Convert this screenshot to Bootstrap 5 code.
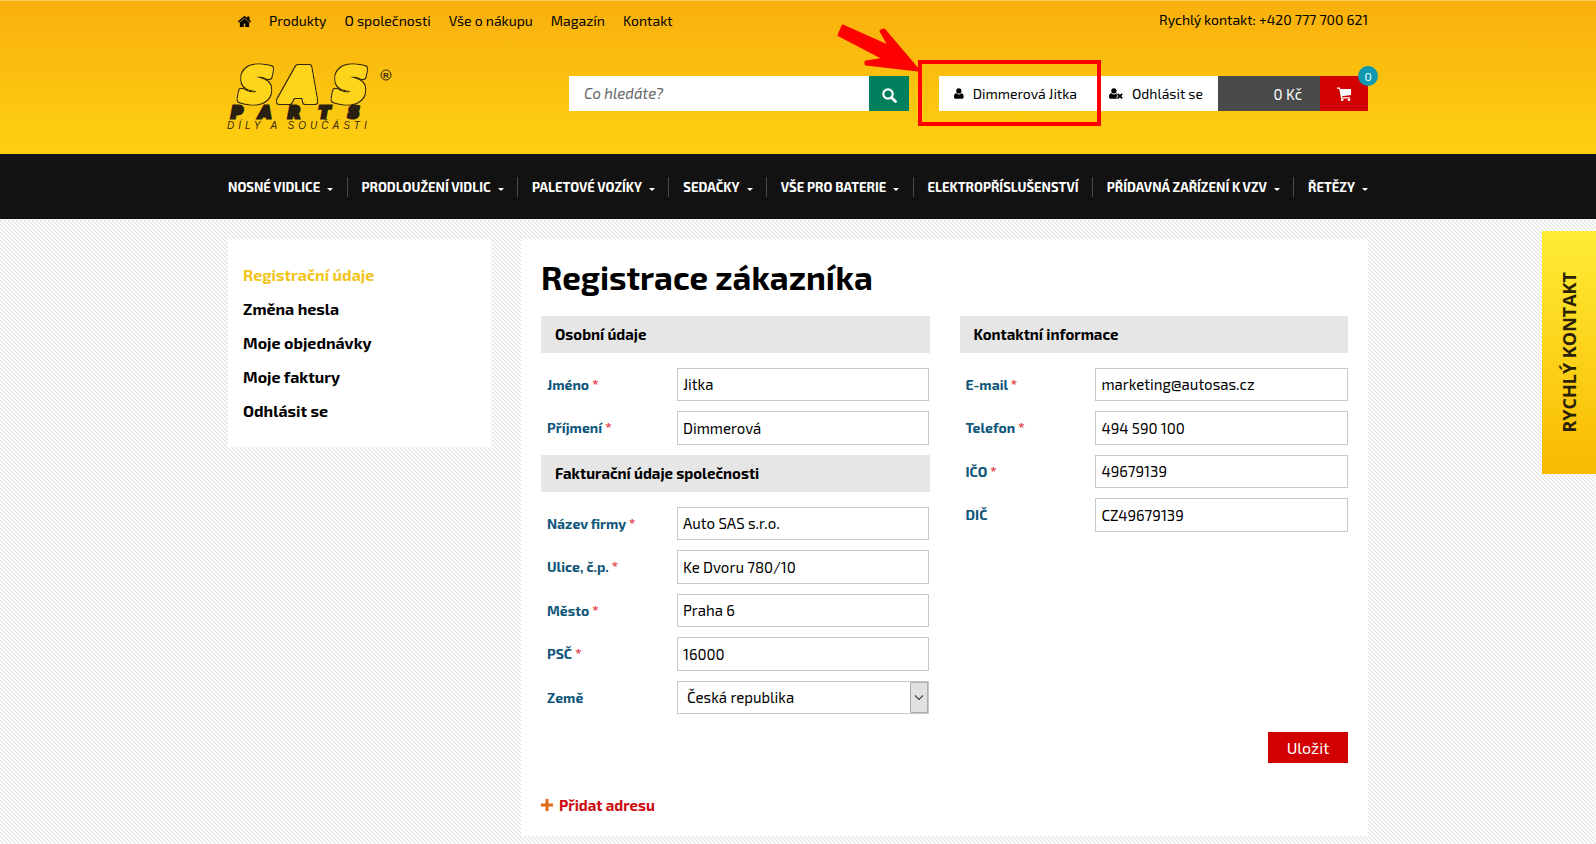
<!DOCTYPE html>
<html lang="cs">
<head>
<meta charset="utf-8">
<meta name="viewport" content="width=device-width, initial-scale=1">
<title>Registrace zákazníka | SAS Parts</title>
<link href="https://cdn.jsdelivr.net/npm/bootstrap@5.3.0/dist/css/bootstrap.min.css" rel="stylesheet">
<style>
  :root { --ink: #000; --red: #d20000; --label: #0f567a; }
  body {
    font-family: "Exo 2", Roboto, "Liberation Sans", sans-serif;
    font-size: 14px; line-height: 20px; color: var(--ink);
    background: #fcfcfc url("data:image/svg+xml,%3Csvg xmlns='http://www.w3.org/2000/svg' width='4' height='4' shape-rendering='crispEdges'%3E%3Cpath fill='%23d4d4d4' d='M0 0h1v1H0zM2 2h1v1H2z'/%3E%3Cpath fill='%23e6e6e6' d='M1 1h1v1H1zM3 3h1v1H3z'/%3E%3C/svg%3E");
  }
  a { color: inherit; text-decoration: none; }
  .site-wrap { max-width: 1164px; }
  .site-head { background: linear-gradient(#f9b00d, #fdd010); border-top: 1px solid #f8d060; height: 154px; }
  .top-links { gap: 18px; padding: 10px 0 0 10px; }
  .top-phone { padding-top: 9px; }
  .head-row { padding-top: 45px; }
  .logo-box { margin-top: -16px; height: 74px; margin-left: -6px; }
  .logo-box svg { overflow: visible; }
  .tools { height: 35px; }
  .search-box { width: 340px; margin-right: 30px; }
  .search-box input { border: 0; border-radius: 0; padding: 0 15px; font-size: 15px; font-style: italic; color: #555; }
  .search-box input::placeholder { color: #666; }
  .search-box button { width: 40px; flex: none; border: 0; background: #007f5c; padding: 0; }
  .user-link { background: #fff; padding: 0 25px 0 15px; gap: 9px; width: 163px; }
  .logout-link { background: #fff; padding: 0 15px 0 7px; gap: 9px; width: 116px; }
  .cart-sum { background: #4a4a4a; color: #fff; width: 102px; padding-right: 18px; font-size: 15px; }
  .cart-btn { background: var(--red); width: 48px; }
  .cart-count { top: -10px; right: -10px; width: 20px; height: 20px; border-radius: 50%; background: #0d9ab0; color: #fff; font-size: 12px; }
  .pointer-mark { left: -102px; top: -54px; z-index: 3; pointer-events: none; }
  .main-nav { background: #121212; height: 65px; color: #fff; font-weight: 700; font-size: 13px; }
  .main-nav li { display: flex; align-items: center; white-space: nowrap; }
  .main-nav li + li::before { content: ""; width: 1px; height: 20px; background: #4a4a4a; margin-right: 14px; }
  .main-nav .caret::after { content: ""; display: inline-block; border: 3px solid transparent; border-top-color: #fff; border-bottom: 0; margin-left: 7px; vertical-align: 1px; }
  .page-grid { display: grid; grid-template-columns: 263px minmax(0, 1fr); gap: 30px; padding-top: 20px; padding-bottom: 8px; }
  .side-menu { background: #fff; padding: 19px 15px; font-size: 16px; line-height: 34px; font-weight: 700; }
  .side-menu .current { color: #f3c41c; }
  .panel { background: #fff; padding: 18px 20px 20px; }
  .panel h1 { font-size: 33px; line-height: 40px; font-weight: 700; margin: 0 0 19px; }
  .form-cols { display: grid; grid-template-columns: 1fr 1fr; column-gap: 30px; }
  .sect { background: #e6e6e6; font-size: 15px; line-height: 37px; font-weight: 700; padding-left: 14px; margin: 0 0 15px; }
  .field { display: grid; grid-template-columns: 35% 65%; height: 43px; padding-bottom: 10px; }
  .field:nth-of-type(even) { height: 44px; }
  .field label { color: var(--label); font-weight: 700; padding-left: 6px; align-self: center; }
  .field label span { color: #e02b35; }
  .field .form-control, .field .form-select { border: 1px solid #c8c8c8; border-radius: 0; color: #000; font-size: 15px; line-height: 20px; padding: 0 5px 1px; height: 100%; }
  .field .form-select { padding-left: 9px; background-position: right center; background-size: 18px 31px;
    background-image: url("data:image/svg+xml,%3Csvg xmlns='http://www.w3.org/2000/svg' viewBox='0 0 18 31'%3E%3Cpath fill='%23e1e1e1' stroke='%23adadad' d='M.5.5h17v30H.5z'/%3E%3Cpath fill='none' stroke='%23444' stroke-width='1.200' d='M5 13.500l4 4 4-4'/%3E%3C/svg%3E"); }
  .save-btn { background: var(--red); color: #fff; border: 0; border-radius: 0; font-size: 16px; line-height: 31px; padding: 0; width: 80px; }
  .add-link { color: #cc0a12; font-size: 15px; font-weight: 700; gap: 6px; margin-top: 32px; }
  .quick-tab { top: 231px; right: 0; width: 54px; height: 243px; background: linear-gradient(#ffec35, #f9ba00); color: #2a2206;
    font: 700 18px/24px "Open Sans", sans-serif; }
  .quick-tab span { writing-mode: vertical-rl; transform: rotate(180deg); }
</style>
</head>
<body>
<header class="site-head">
  <div class="container site-wrap">
    <div class="d-flex justify-content-between">
      <nav class="d-flex top-links" aria-label="Informace">
        <a href="#" aria-label="Domů" class="d-flex align-items-center"><svg width="13" height="11" viewBox="0 0 13 11"><path d="M6.500 0 0 5.500l.8 1L6.500 1.800l5.700 4.700.8-1-1.700-1.500V.7H9.300v1.600zM6.500 2.700 2 6.400V11h3.600V7.500h1.800V11H11V6.400z" stroke="#000" stroke-width=".3"/></svg></a>
        <a href="#">Produkty</a>
        <a href="#">O společnosti</a>
        <a href="#">Vše o nákupu</a>
        <a href="#">Magazín</a>
        <a href="#">Kontakt</a>
      </nav>
      <div class="top-phone">Rychlý kontakt: +420 777 700 621</div>
    </div>
    <div class="d-flex justify-content-between head-row">
      <a href="#" class="logo-box" aria-label="SAS Parts">
        <svg width="176" height="74" viewBox="0 0 176 74">
          <defs>
            <filter id="rim" x="-10%" y="-10%" width="120%" height="120%">
              <feMorphology in="SourceAlpha" operator="dilate" radius="1" result="fat"/>
              <feFlood flood-color="#33260c"/>
              <feComposite in2="fat" operator="in"/>
              <feMerge><feMergeNode/><feMergeNode in="SourceGraphic"/></feMerge>
            </filter>
          </defs>
          <g font-family="DejaVu Sans" font-weight="bold" font-style="italic">
            <text x="18 61 112" y="41" font-size="45" fill="#ffd51c" stroke="#ffd51c" stroke-width="6" stroke-linejoin="round" filter="url(#rim)">SAS</text>
            <text x="9 37 66 97 126" y="58" font-size="16" fill="#2a1f10" stroke="#2a1f10" stroke-width="3">PARTS</text>
          </g>
          <text x="5" y="69" font-family="Liberation Sans" font-size="10" font-style="italic" letter-spacing="4" fill="#3a2a0c">DÍLY A SOUČÁSTI</text>
          <circle cx="164" cy="15" r="5" fill="none" stroke="#33260c"/>
          <text x="164" y="18" text-anchor="middle" font-family="Liberation Sans" font-weight="bold" font-size="8" fill="#33260c">R</text>
        </svg>
      </a>
      <div class="d-flex tools">
        <form class="d-flex search-box">
          <input class="form-control shadow-none" type="search" placeholder="Co hledáte?" aria-label="Hledat">
          <button type="button" aria-label="Hledat"><svg width="15" height="15" viewBox="0 0 15 15" fill="none" stroke="#fff" stroke-width="2.200"><circle cx="6" cy="6" r="4.700"/><path d="m9.500 9.500 4 4" stroke-width="2.800" stroke-linecap="round"/></svg></button>
        </form>
        <div class="position-relative d-flex">
          <a href="#" class="d-flex align-items-center user-link text-nowrap">
            <svg width="12" height="13" viewBox="0 0 12 13"><circle cx="6" cy="3.300" r="3.300"/><path d="M3 6.200C1 6.500 0 8 0 10.500 0 12.200.8 13 2 13h8c1.200 0 2-.8 2-2.500C12 8 11 6.500 9 6.200a4.300 4.300 0 0 1-6 0z"/></svg>
            Dimmerová Jitka</a>
          <svg class="position-absolute pointer-mark" width="266" height="106" viewBox="0 0 266 106" aria-hidden="true">
            <path fill="red" stroke="red" stroke-width="3" stroke-linejoin="round" d="M6 4 53 25 44 9l3-1L81 48l-52-6v-2l19-3L2 13z"/>
            <rect x="83" y="40" width="179" height="62" fill="none" stroke="red" stroke-width="4"/>
          </svg>
        </div>
        <a href="#" class="d-flex align-items-center logout-link text-nowrap">
          <svg width="17" height="13" viewBox="0 0 17 13"><circle cx="6" cy="3.300" r="3.300"/><path d="M3 6.200C1 6.500 0 8 0 10.500 0 12.200.8 13 2 13h8.500c.8 0 1-.5 1.300-1V8C11.300 7 10.300 6.300 9 6.200a4.300 4.300 0 0 1-6 0z"/><path d="m10 6.500 6 6m0-6-6 6" stroke="#fff" stroke-width="3.400"/><path d="m10.500 7 5.500 5.500m0-5.500-5.500 5.500" stroke="#000" stroke-width="2.200"/></svg>
          Odhlásit se</a>
        <div class="d-flex align-items-center justify-content-end cart-sum">0 Kč</div>
        <a href="#" class="d-flex align-items-center justify-content-center position-relative cart-btn" aria-label="Košík">
          <svg width="15" height="14" viewBox="0 0 15 14" fill="#fff"><path d="M0 .5h3l.4 1.600H14v6L5 9.200l.2 1H13v1.200H4L2.200 1.800H0z"/><circle cx="5.200" cy="12.700" r="1.300"/><circle cx="12" cy="12.700" r="1.300"/></svg>
          <span class="position-absolute d-flex align-items-center justify-content-center cart-count">0</span>
        </a>
      </div>
    </div>
  </div>
</header>

<nav class="main-nav" aria-label="Kategorie">
  <ul class="container site-wrap list-unstyled d-flex justify-content-between align-items-center h-100 mb-0">
    <li><a href="#" class="caret">NOSNÉ VIDLICE</a></li>
    <li><a href="#" class="caret">PRODLOUŽENÍ VIDLIC</a></li>
    <li><a href="#" class="caret">PALETOVÉ VOZÍKY</a></li>
    <li><a href="#" class="caret">SEDAČKY</a></li>
    <li><a href="#" class="caret">VŠE PRO BATERIE</a></li>
    <li><a href="#">ELEKTROPŘÍSLUŠENSTVÍ</a></li>
    <li><a href="#" class="caret">PŘÍDAVNÁ ZAŘÍZENÍ K VZV</a></li>
    <li><a href="#" class="caret">ŘETĚZY</a></li>
  </ul>
</nav>

<div class="container site-wrap page-grid">
  <aside>
    <nav class="side-menu d-flex flex-column" aria-label="Můj účet">
      <a href="#" class="current">Registrační údaje</a>
      <a href="#">Změna hesla</a>
      <a href="#">Moje objednávky</a>
      <a href="#">Moje faktury</a>
      <a href="#">Odhlásit se</a>
    </nav>
  </aside>
  <main class="panel">
    <h1>Registrace zákazníka</h1>
    <form>
      <div class="form-cols">
        <div>
          <section>
            <h2 class="sect">Osobní údaje</h2>
            <div class="field"><label for="fn">Jméno <span>*</span></label><input class="form-control" id="fn" value="Jitka"></div>
            <div class="field"><label for="ln">Příjmení <span>*</span></label><input class="form-control" id="ln" value="Dimmerová"></div>
          </section>
          <section>
            <h2 class="sect">Fakturační údaje společnosti</h2>
            <div class="field"><label for="co">Název firmy <span>*</span></label><input class="form-control" id="co" value="Auto SAS s.r.o."></div>
            <div class="field"><label for="st">Ulice, č.p. <span>*</span></label><input class="form-control" id="st" value="Ke Dvoru 780/10"></div>
            <div class="field"><label for="ci">Město <span>*</span></label><input class="form-control" id="ci" value="Praha 6"></div>
            <div class="field"><label for="zip">PSČ <span>*</span></label><input class="form-control" id="zip" value="16000"></div>
            <div class="field"><label for="ctry">Země</label><select class="form-select" id="ctry"><option>Česká republika</option></select></div>
          </section>
        </div>
        <section>
          <h2 class="sect">Kontaktní informace</h2>
          <div class="field"><label for="em">E-mail <span>*</span></label><input class="form-control" type="email" id="em" value="marketing@autosas.cz"></div>
          <div class="field"><label for="tel">Telefon <span>*</span></label><input class="form-control" type="tel" id="tel" value="494 590 100"></div>
          <div class="field"><label for="ico">IČO <span>*</span></label><input class="form-control" id="ico" value="49679139"></div>
          <div class="field"><label for="dic">DIČ</label><input class="form-control" id="dic" value="CZ49679139"></div>
        </section>
      </div>
      <div class="text-end mt-2"><button type="button" class="btn save-btn">Uložit</button></div>
    </form>
    <a href="#" class="d-inline-flex align-items-center add-link"><svg width="12" height="12" viewBox="0 0 12 12"><path d="M6 0v12M0 6h12" stroke="#e06a1a" stroke-width="3"/></svg>Přidat adresu</a>
  </main>
</div>

<a href="#" class="position-fixed d-flex align-items-center justify-content-center quick-tab"><span>RYCHLÝ KONTAKT</span></a>
<script src="https://cdn.jsdelivr.net/npm/bootstrap@5.3.0/dist/js/bootstrap.bundle.min.js"></script>
</body>
</html>
